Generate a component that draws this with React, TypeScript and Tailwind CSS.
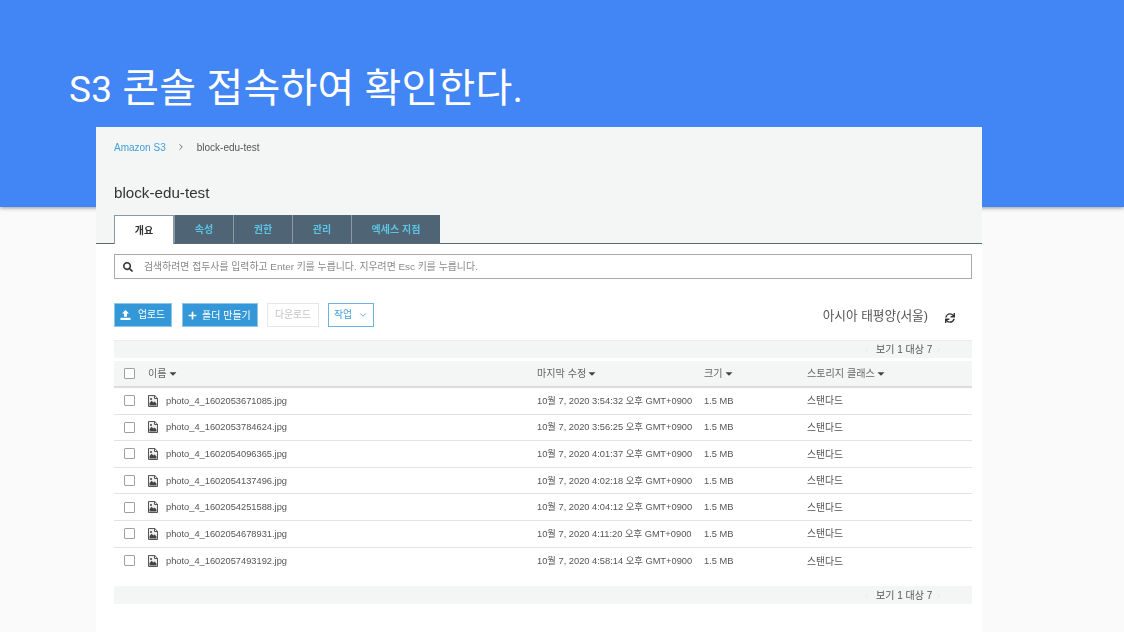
import React from 'react';
import { ChevronDown, ChevronLeft, ChevronRight } from 'lucide-react';
import { FaCaretDown, FaPlus, FaSearch, FaSync } from 'react-icons/fa';

const FONT = "font-['Liberation_Sans','Noto_Sans_CJK_KR',sans-serif]";

const FILES = [
  { name: 'photo_4_1602053671085.jpg', time: '3:54:32' },
  { name: 'photo_4_1602053784624.jpg', time: '3:56:25' },
  { name: 'photo_4_1602054096365.jpg', time: '4:01:37' },
  { name: 'photo_4_1602054137496.jpg', time: '4:02:18' },
  { name: 'photo_4_1602054251588.jpg', time: '4:04:12' },
  { name: 'photo_4_1602054678931.jpg', time: '4:11:20' },
  { name: 'photo_4_1602057493192.jpg', time: '4:58:14' },
];

const TABS = [
  { label: '속성', width: 'w-[59px]' },
  { label: '권한', width: 'w-[59px]' },
  { label: '관리', width: 'w-[59px]' },
  { label: '엑세스 지점', width: 'w-[89px]' },
];

function FileIcon() {
  return (
    <svg width="10" height="12" viewBox="0 0 10 12" className="shrink-0">
      <path d="M0.5 0.5H6.8L9.5 3.2V11.5H0.5Z" fill="#eee" stroke="#555" strokeWidth="1" />
      <path d="M6.5 0.5V3.5H9.5" fill="none" stroke="#555" strokeWidth="1" />
      <path d="M1.5 10.5V8L3.6 5.8L5.4 7.6L6.6 6.6L8.5 8.4V10.5Z" fill="#444" />
      <circle cx="3" cy="4" r="1" fill="#444" />
    </svg>
  );
}

function UploadIcon() {
  return (
    <svg width="11" height="10" viewBox="0 0 11 10" className="shrink-0">
      <path d="M5.5 0L9 3.6H7V6.8H4V3.6H2Z" fill="#fff" />
      <path d="M0.5 7.8H10.5V10H0.5Z" fill="#fff" />
    </svg>
  );
}

function Pager() {
  return (
    <div className="flex items-center text-[10px] leading-none text-[#555]">
      <ChevronLeft className="w-[9px] h-[9px] mr-[5px] text-[#e2e6e6]" />
      <span className="w-[55px] whitespace-nowrap pt-[1px]">보기 1 대상 7</span>
      <ChevronRight className="w-[9px] h-[9px] ml-[3px] text-[#e2e6e6]" />
    </div>
  );
}

function Checkbox() {
  return <div className="w-[11px] h-[11px] border border-[#a0a0a0] rounded-[1px] bg-white shrink-0" />;
}

function Caret() {
  return <FaCaretDown className="w-[8px] h-[11px] text-[#444]" />;
}

export default function App() {
  return (
    <div className={`w-[1124px] h-[632px] overflow-hidden bg-[#fafafa] ${FONT}`}>
      {/* Slide title */}
      <div className="h-[207px] bg-[#4285f4] shadow-[0_1px_4px_rgba(0,0,0,0.4)] pl-[69px] pt-[64px]">
        <h1 className="text-[40px] leading-[50px] tracking-[0.2px] text-white font-['Roboto','Noto_Sans_CJK_KR',sans-serif]">
          <span className="text-[37px]">S3</span> 콘솔 접속하여 확인한다.
        </h1>
      </div>

      {/* Console capture */}
      <div className="relative ml-[96px] w-[886px] h-[505px] -mt-[80px] bg-white blur-[0.35px]">
        <div className="h-[117px] bg-[#f4f6f6] border-b border-[#546b76] pl-[18px] flex flex-col">
          <div className="flex items-center h-[14px] mt-[13px] text-[10px] text-[#555]">
            <span className="text-[#3f9fd8]">Amazon S3</span>
            <ChevronRight className="w-[10px] h-[10px] ml-[10px] mr-[11px] text-[#555]" />
            <span>block-edu-test</span>
          </div>
          <div className="mt-[29px] text-[15.2px] leading-[20px] text-[#333]">block-edu-test</div>
          <div className="flex mt-[12px] h-[29px]">
            <div className="w-[60px] h-[29px] bg-white border-x border-t border-[#8a9aa4] flex items-center justify-center text-[10px] font-bold text-[#333] relative z-10">
              개요
            </div>
            {TABS.map((tab) => (
              <div
                key={tab.label}
                className={`${tab.width} h-[28px] bg-[#4f6474] border-l border-[#8a9aa4] flex items-center justify-center text-[10px] font-bold text-[#5cc4e4]`}
              >
                {tab.label}
              </div>
            ))}
          </div>
        </div>

        <div className="pl-[18px] pr-[10px]">
          {/* Search */}
          <div className="mt-[10px] h-[25px] border border-[#aaa] flex items-center pl-[8px]">
            <FaSearch className="w-[10px] h-[10px] text-[#333]" />
            <span className="ml-[11px] pt-[2px] text-[9.9px] text-[#888]">
              검색하려면 접두사를 입력하고 Enter 키를 누릅니다. 지우려면 Esc 키를 누릅니다.
            </span>
          </div>

          {/* Actions */}
          <div className="mt-[24px] h-[24px] flex items-center">
            <div className="w-[58px] h-[24px] bg-[#3498d8] border border-[#8cc6ea] flex items-center pl-[5px] gap-[7px] text-[9.8px] text-white">
              <UploadIcon />
              <span className="pt-[1px]">업로드</span>
            </div>
            <div className="ml-[10px] w-[76px] h-[24px] bg-[#3498d8] border border-[#8cc6ea] flex items-center pl-[5px] gap-[5px] text-[10px] text-white">
              <FaPlus className="w-[9px] h-[9px]" />
              <span className="pt-[1px]">폴더 만들기</span>
            </div>
            <div className="ml-[9px] w-[52px] h-[24px] bg-white border border-[#e6e6e6] flex items-center justify-center text-[9.8px] text-[#c4c4c4]">
              <span className="pt-[1px]">다운로드</span>
            </div>
            <div className="ml-[9px] w-[46px] h-[24px] bg-white border border-[#6cb4e0] flex items-center justify-center gap-[6px] text-[9.8px] text-[#3f9fd8]">
              <span className="pt-[1px]">작업</span>
              <ChevronDown className="w-[10px] h-[10px]" />
            </div>
            <div className="ml-auto flex items-center pr-[17px]">
              <span className="text-[12.7px] text-[#555] pt-[4px]">아시아 태평양(서울)</span>
              <FaSync className="ml-[17px] mt-[6px] w-[10px] h-[10px] text-[#333]" />
            </div>
          </div>

          {/* Pagination */}
          <div className="mt-[13px] h-[18px] bg-[#f4f6f6] border-t border-[#ececec] flex items-center justify-end pr-[29px]">
            <Pager />
          </div>

          {/* Table head */}
          <div className="mt-[3px] h-[27px] bg-[#f4f6f6] border-b-2 border-[#dcdcdc] flex items-center text-[10.1px] text-[#666]">
            <div className="pl-[10px] w-[34px] shrink-0">
              <Checkbox />
            </div>
            <div className="w-[389px] flex items-center gap-[2px]">
              이름 <Caret />
            </div>
            <div className="w-[167px] flex items-center gap-[2px]">
              마지막 수정 <Caret />
            </div>
            <div className="w-[103px] flex items-center gap-[2px]">
              크기 <Caret />
            </div>
            <div className="flex items-center gap-[2px]">
              스토리지 클래스 <Caret />
            </div>
          </div>

          {/* Rows */}
          {FILES.map((file, i) => (
            <div
              key={file.name}
              className={`h-[26.6px] flex items-center text-[9.3px] text-[#555] ${
                i < FILES.length - 1 ? 'border-b border-[#e2e2e2]' : ''
              }`}
            >
              <div className="pl-[10px] w-[34px] shrink-0">
                <Checkbox />
              </div>
              <div className="w-[389px] flex items-center gap-[8px]">
                <FileIcon />
                <span className="pt-[2px]">{file.name}</span>
              </div>
              <div className="w-[167px] whitespace-nowrap pt-[2px]">10월 7, 2020 {file.time} 오후 GMT+0900</div>
              <div className="w-[103px] pt-[2px]">1.5 MB</div>
              <div className="text-[9.8px] pt-[2px]">스탠다드</div>
            </div>
          ))}

          {/* Bottom pagination */}
          <div className="mt-[12px] h-[18px] bg-[#f4f6f6] flex items-center justify-end pr-[29px]">
            <Pager />
          </div>
        </div>
      </div>
    </div>
  );
}
